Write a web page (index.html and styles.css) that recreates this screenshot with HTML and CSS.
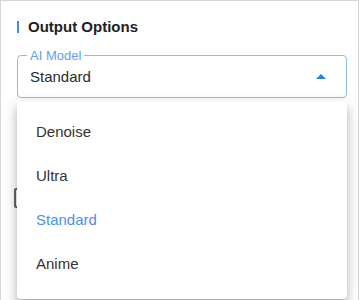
FILE: index.html
```html
<!DOCTYPE html>
<html lang="en">
<head>
  <meta charset="UTF-8">
  <meta name="viewport" content="width=device-width, initial-scale=1.0">
  <title>Output Options</title>
  <link rel="stylesheet" href="styles.css">
</head>
<body>
  <div class="panel">
    <h2 class="panel-title">Output Options</h2>

    <div class="select">
      <div class="field">
        <span class="field-label">AI Model</span>
        <span class="field-value">Standard</span>
        <svg class="arrow" width="10" height="5" viewBox="0 0 10 5"><path d="M0 5 L5 0 L10 5 Z" fill="#1f86e6"/></svg>
      </div>
      <ul class="menu">
        <li>Denoise</li>
        <li>Ultra</li>
        <li class="selected">Standard</li>
        <li>Anime</li>
      </ul>
    </div>

    <div class="option-row">
      <span class="checkbox"></span>
      <span class="option-text">Keep original size</span>
    </div>
  </div>
</body>
</html>
```

FILE: styles.css
```css
body {
  margin: 0;
  font-family: "Liberation Sans", Arial, sans-serif;
  background: #fff;
}
.panel {
  box-sizing: border-box;
  width: 359px;
  height: 300px;
  overflow: hidden;
  border: 1px solid #d6d6d6;
  border-bottom: 0;
  padding: 16px 10px 0 16px;
}
.panel-title {
  margin: 0;
  font-size: 15px;
  line-height: 20px;
  font-weight: bold;
  color: #222;
  display: flex;
  align-items: center;
  gap: 9px;
}
.panel-title::before {
  content: "";
  width: 2px;
  height: 12px;
  background: #3d8bf0;
}
.select {
  position: relative;
  margin-top: 18px;
  width: 330px;
}
.field {
  position: relative;
  box-sizing: border-box;
  height: 43px;
  border: 1px solid #8dbcef;
  border-radius: 4px;
  display: flex;
  align-items: center;
  justify-content: space-between;
  padding: 0 20px 0 12px;
}
.field-label {
  position: absolute;
  top: -8px;
  left: 9px;
  padding: 0 3px;
  background: #fff;
  font-size: 13px;
  line-height: 15px;
  color: #5b9ff0;
}
.field-value {
  font-size: 15px;
  color: #2b2b2b;
}
.arrow {
  display: block;
}
.menu {
  position: absolute;
  top: 46px;
  left: 0;
  right: 0;
  margin: 0;
  padding: 9px 0 13px;
  list-style: none;
  background: #fff;
  border-radius: 4px;
  box-shadow: 0 5px 5px -3px rgba(0,0,0,.2), 0 8px 10px 1px rgba(0,0,0,.14), 0 3px 14px 2px rgba(0,0,0,.12);
  z-index: 2;
}
.menu li {
  height: 44px;
  line-height: 44px;
  padding: 0 19px;
  font-size: 15px;
  color: #333;
}
.menu li.selected {
  color: #4a90e8;
}
.option-row {
  display: flex;
  align-items: center;
  gap: 10px;
  margin-top: 90px;
  margin-left: -3px;
}
.checkbox {
  box-sizing: border-box;
  width: 20px;
  height: 20px;
  border: 2px solid #666;
  border-radius: 2px;
}
.option-text {
  font-size: 14px;
  color: #333;
}
```
